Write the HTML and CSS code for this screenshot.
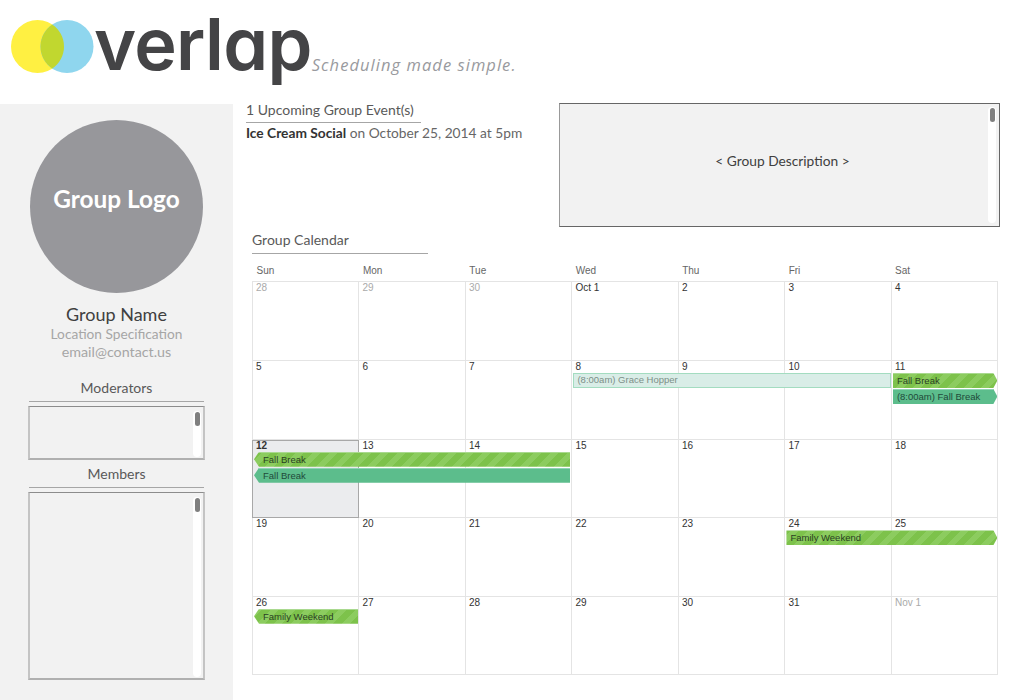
FILE: index.html
```html
<!DOCTYPE html>
<html lang="en">
<head>
<meta charset="utf-8">
<title>Overlap</title>
<link rel="stylesheet" href="styles.css">
</head>
<body>
<header class="header">
  <svg class="logo-mark" width="83" height="56" viewBox="0 0 83 56" aria-hidden="true">
    <circle cx="26.5" cy="26.5" r="26.5" fill="#fff042"/>
    <circle cx="56" cy="26.5" r="26.5" fill="#8fd6ee"/>
    <path d="M41.25 4.48A26.5 26.5 0 0 1 41.25 48.52A26.5 26.5 0 0 1 41.25 4.48z" fill="#c1d72f"/>
  </svg>
  <span class="wordmark">verlap</span>
  <span class="tagline">Scheduling made simple.</span>
</header>
<div class="layout">
  <aside class="sidebar">
    <div class="group-logo"><span>Group Logo</span></div>
    <div class="group-name">Group Name</div>
    <div class="group-meta">Location Specification</div>
    <div class="group-meta group-email">email@contact.us</div>
    <h2 class="side-title side-title-first">Moderators</h2>
    <div class="list-box list-mods"><div class="track"><div class="thumb"></div></div></div>
    <h2 class="side-title">Members</h2>
    <div class="list-box list-members"><div class="track"><div class="thumb"></div></div></div>
  </aside>
  <main class="main">
    <section class="top">
      <div class="upcoming">
        <h2 class="rule-title">1 Upcoming Group Event(s)</h2>
        <p class="event-line"><strong>Ice Cream Social</strong> on October 25, 2014 at 5pm</p>
      </div>
      <div class="description">
        <span>&lt; Group Description &gt;</span>
        <div class="track"><div class="thumb"></div></div>
      </div>
    </section>
    <section class="calendar">
      <h2 class="rule-title cal-title">Group Calendar</h2>
      <div class="dow">
        <span>Sun</span><span>Mon</span><span>Tue</span><span>Wed</span><span>Thu</span><span>Fri</span><span>Sat</span>
      </div>
      <div class="weeks">
        <div class="week">
          <div class="day off">28</div><div class="day off">29</div><div class="day off">30</div><div class="day">Oct 1</div><div class="day">2</div><div class="day">3</div><div class="day">4</div>
        </div>
        <div class="week">
          <div class="day">5</div><div class="day">6</div><div class="day">7</div><div class="day">8</div><div class="day">9</div><div class="day">10</div><div class="day">11</div>
          <div class="ev pale col4-3 row2">(8:00am) Grace Hopper</div>
          <div class="ev stripe arrow-r col7-1 row2">Fall Break</div>
          <div class="ev teal arrow-r col7-1 row3">(8:00am) Fall Break</div>
        </div>
        <div class="week">
          <div class="day today">12</div><div class="day">13</div><div class="day">14</div><div class="day">15</div><div class="day">16</div><div class="day">17</div><div class="day">18</div>
          <div class="ev stripe arrow-l col1-3 row2">Fall Break</div>
          <div class="ev teal arrow-l col1-3 row3">Fall Break</div>
        </div>
        <div class="week">
          <div class="day">19</div><div class="day">20</div><div class="day">21</div><div class="day">22</div><div class="day">23</div><div class="day">24</div><div class="day">25</div>
          <div class="ev stripe arrow-r col6-2 row2">Family Weekend</div>
        </div>
        <div class="week">
          <div class="day">26</div><div class="day">27</div><div class="day">28</div><div class="day">29</div><div class="day">30</div><div class="day">31</div><div class="day off">Nov 1</div>
          <div class="ev stripe arrow-l col1-1 row2">Family Weekend</div>
        </div>
      </div>
    </section>
  </main>
</div>
</body>
</html>
```
FILE: styles.css
```css
* { box-sizing: border-box; }
html, body { margin: 0; padding: 0; height: 700px; overflow: hidden; background: #fff; }
body { font-family: "Lato", "Liberation Sans", sans-serif; color: #404040; }
h2, p { margin: 0; font-weight: 400; }

.header { height: 103px; display: flex; align-items: flex-start; padding: 20px 0 0 11px; }
.logo-mark { flex: none; }
.wordmark {
  font: 600 72px/1 "Inter", "Lato", sans-serif;
  font-feature-settings: "cv11" 1;
  color: #444446;
  margin: -12px 0 0 0;
  letter-spacing: -0.7px;
}
.tagline {
  font: italic 16.5px/1 "Open Sans", sans-serif;
  letter-spacing: 1.05px;
  color: #999a9e;
  margin: 37px 0 0 0;
}

.layout { display: flex; height: 597px; }
.sidebar {
  width: 233px;
  flex: none;
  margin-top: 1px;
  background: #f2f2f2;
  padding-top: 16px;
  display: flex;
  flex-direction: column;
  align-items: center;
}
.group-logo {
  width: 173px;
  height: 173px;
  border-radius: 50%;
  background: #97979b;
  color: #fff;
  font-size: 24.4px;
  font-weight: 700;
  text-align: center;
  padding-top: 64px;
  line-height: 30px;
}
.group-name { font-size: 18px; line-height: 22px; margin-top: 10px; color: #404040; }
.group-meta { font-size: 13.7px; line-height: 18px; color: #a6a6a6; }
.group-email { font-size: 14.3px; }
.side-title {
  width: 175px;
  font-size: 14px;
  line-height: 18px;
  text-align: center;
  color: #595959;
  padding-bottom: 4px;
  border-bottom: 1px solid #a6a6a6;
  margin-top: 5px;
}
.side-title-first { margin-top: 18px; }
.list-box {
  width: 177px;
  margin-top: 4px;
  background: #f2f2f2;
  border: 2px solid #c4c4c4;
  border-top: 1px solid #8c8c8c;
  border-bottom-color: #b0b0b0;
  display: flex;
  justify-content: flex-end;
  padding: 4px 2px 1px 0;
}
.list-mods { height: 54px; }
.list-members { height: 188px; }

.track { width: 8px; height: 100%; background: #fff; border-radius: 4px; padding: 1px 1.5px; flex: none; }
.thumb { width: 5px; height: 14px; background: #7f7f7f; border-radius: 2.5px; }

.main { flex: 1; padding-left: 13px; min-width: 0; }
.top { display: flex; justify-content: space-between; align-items: flex-start; padding-right: 24px; margin-bottom: 5px; height: 124px; }
.upcoming { width: 300px; }
.rule-title {
  font-size: 14px;
  color: #595959;
  border-bottom: 1px solid #a6a6a6;
  width: 175px;
}
.upcoming .rule-title { height: 20px; line-height: 14px; }
.event-line { font-size: 13.75px; line-height: 18px; color: #666; margin-top: 1px; white-space: nowrap; }
.event-line strong { color: #333; font-weight: 700; }

.description {
  width: 441px;
  height: 124px;
  background: #f2f2f2;
  border: 1px solid #666;
  border-left-color: #999;
  position: relative;
  display: flex;
  align-items: center;
  justify-content: center;
  font-size: 13.75px;
  color: #404040;
  padding: 0 0 10px 6px;
}
.description .track { position: absolute; top: 3px; right: 3px; bottom: 3px; height: auto; }

.calendar { padding-left: 6px; width: 753px; }
.cal-title { width: 176px; height: 22px; line-height: 16px; }
.dow {
  display: grid;
  grid-template-columns: repeat(7, 1fr);
  width: 745px;
  font: 10px/12px "Liberation Sans", sans-serif;
  color: #666;
  height: 27.45px;
  padding-top: 11px;
}
.dow span { padding-left: 4.5px; }
.weeks { width: 746.4px; border-top: 1px solid #e4e4e4; border-left: 1px solid #e4e4e4; }
.week {
  display: grid;
  grid-template-columns: repeat(7, 1fr);
  grid-template-rows: 12px 16px 16px 1fr;
  height: 78.6px;
  font: 10px/12px "Liberation Sans", sans-serif;
}
.day {
  grid-row: 1 / -1;
  padding: 0 0 0 3px;
  color: #333;
  border-right: 1px solid #e4e4e4;
  border-bottom: 1px solid #e4e4e4;
}
.day:nth-child(1) { grid-column: 1; }
.day:nth-child(2) { grid-column: 2; }
.day:nth-child(3) { grid-column: 3; }
.day:nth-child(4) { grid-column: 4; }
.day:nth-child(5) { grid-column: 5; }
.day:nth-child(6) { grid-column: 6; }
.day:nth-child(7) { grid-column: 7; }
.day.off { color: #aaa; }
.day.today { background: #ebecee; outline: 1px solid #a8a8a8; outline-offset: -1px; font-weight: 700; margin-left: -1px; padding-left: 4px; }

.ev {
  height: 15px;
  line-height: 14px;
  white-space: nowrap;
  overflow: hidden;
  font-size: 9.5px;
  color: #2a3f24;
  padding-left: 4px;
  z-index: 1;
}
.row2 { grid-row: 2; }
.row3 { grid-row: 3; }
.col4-3 { grid-column: 4 / span 3; margin: 0 1px; }
.col7-1 { grid-column: 7; margin: 0 1px; }
.col1-3 { grid-column: 1 / span 3; margin: 0 2px 0 1px; padding-left: 9px; }
.col6-2 { grid-column: 6 / span 2; margin: 0 1px; }
.col1-1 { grid-column: 1; margin: 0 1px; padding-left: 9px; }
.pale { background: #d9ede7; border: 1px solid #a3dcc0; color: #7d8f88; line-height: 12px; padding-left: 3px; }
.stripe {
  background: repeating-linear-gradient(-45deg, #7dc24b 0 6px, #8ccc5f 6px 12px);
  border-top: 1px solid #a9d98f;
}
.teal { background: #5cbd8c; color: #1f4a3a; border-top: 1px solid #8fd3b3; line-height: 13px; }
.arrow-r { clip-path: polygon(0 0, calc(100% - 4px) 0, 100% 50%, calc(100% - 4px) 100%, 0 100%); }
.arrow-l { clip-path: polygon(5px 0, 100% 0, 100% 100%, 5px 100%, 0 50%); }
```
